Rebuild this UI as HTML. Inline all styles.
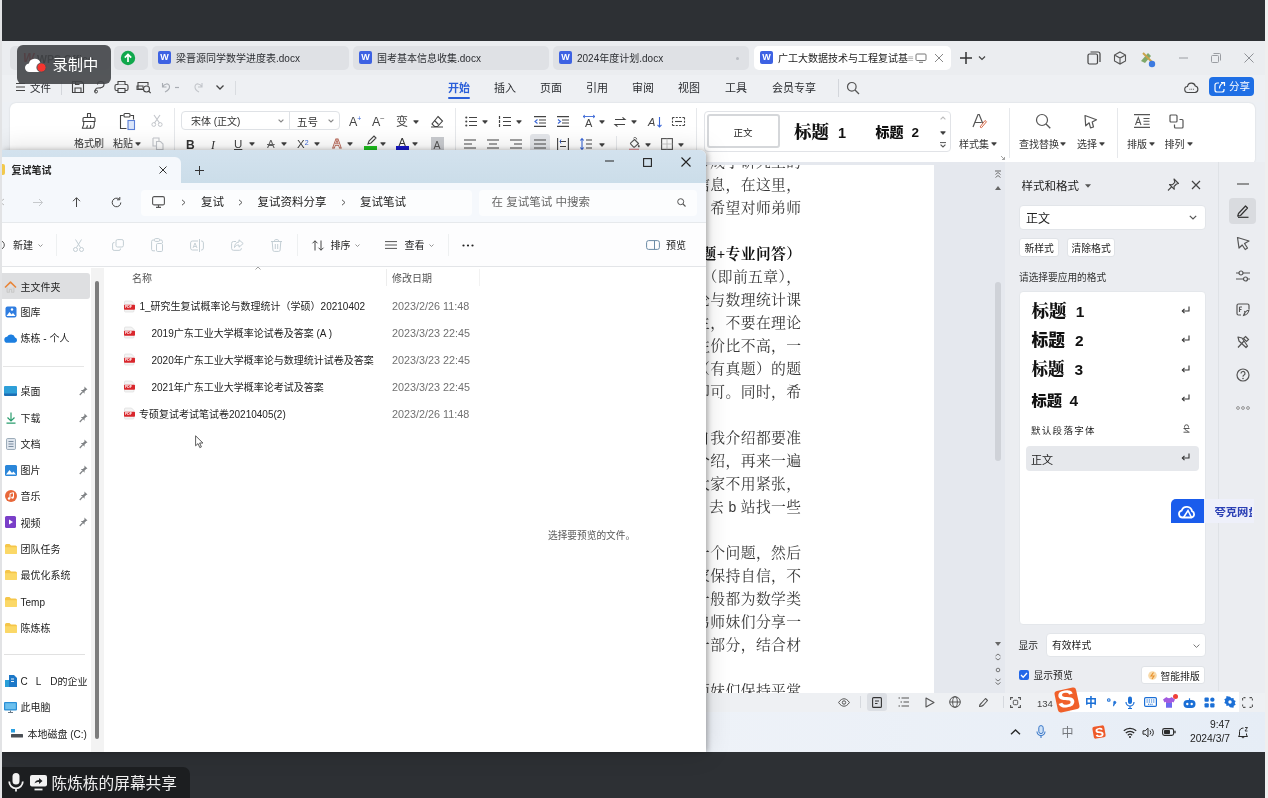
<!DOCTYPE html>
<html lang="zh-CN">
<head>
<meta charset="utf-8">
<title>屏幕共享</title>
<style>
*{box-sizing:border-box;margin:0;padding:0}
html,body{width:1268px;height:798px;overflow:hidden;background:#2d3034}
body{position:relative;font-family:"Liberation Sans","Noto Sans CJK SC",sans-serif;font-size:10px;color:#333;filter:blur(0.45px)}
.abs{position:absolute}
.t{position:absolute;white-space:nowrap;line-height:1;margin-top:1.300px}
svg{position:absolute;overflow:visible}
/* ---------- frame ---------- */
#leftstrip{left:0;top:0;width:1.500px;height:798px;background:#e2e3e5}
#wps{left:2px;top:41px;width:1263px;height:711px;overflow:hidden;background:#edf0f4}
#tabbar{left:0;top:0;width:1266px;height:34px;background:#ebedf0}
.tab{position:absolute;top:5px;height:24px;border-radius:5px;background:#dfe1e5}
.tab.on{background:#fff}
.wico{position:absolute;top:5px;left:6px;width:13px;height:13px;border-radius:2px;background:#3d62e3;color:#fff;font-size:9px;font-weight:bold;text-align:center;line-height:13px}
.tab .t{left:24px;top:7px;font-size:10px;color:#2d2f33}
#menubar{left:0;top:34px;width:1266px;height:27px;background:#eef0f3}
.m{position:absolute;top:8.300px;font-size:11px;color:#2a2c30;white-space:nowrap;line-height:1}
#ribbon{left:8px;top:62px;width:1245px;height:61.500px;background:#fff;border-radius:6px;box-shadow:0 0 2px rgba(0,0,0,.12)}
#ribbon .t{font-size:10px;color:#333}
/* ---------- doc ---------- */
#docbg{left:700px;top:121px;width:304px;height:531.500px;background:#e5e8ee;border-right:1px solid #dcdfe5}
#page{left:704px;top:123.500px;width:228px;height:529px;background:#fff;overflow:hidden}
.dl{position:absolute;left:0;white-space:nowrap;font-family:"Liberation Serif","Noto Serif CJK SC",serif;font-size:14.800px;letter-spacing:.4px;color:#383838;line-height:16px}
#panel{left:1003px;top:121px;width:263px;height:531.500px;background:#ebedf1}
#rtool{left:1216px;top:121px;width:50px;height:529px}
#status{left:700px;top:650px;width:566px;height:21px;background:linear-gradient(transparent 1.500px,#eef0f3 1.500px)}
#taskbar{left:700px;top:671px;width:566px;height:40px;background:linear-gradient(90deg,#eef2f8,#e6edf6)}
/* ---------- explorer ---------- */
#exp{left:1.500px;top:150px;width:704.500px;height:602px;background:#fff;box-shadow:2px 0 5px rgba(0,0,0,.26),0 0 26px rgba(0,0,0,.15);border-radius:0 6px 0 0;overflow:hidden}
#etitle{left:0;top:0;width:706px;height:33px;background:linear-gradient(#d3e2ee,#cbdde9)}
#etab{left:-6px;top:7px;width:185px;height:26px;background:#f5f8fc;border-radius:6px 6px 0 0}
#eaddr{left:0;top:33px;width:706px;height:39px;background:#f5f8fc}
#etool{left:0;top:72px;width:706px;height:45px;background:#fdfdfe;border-bottom:1px solid #e3e5e8;border-top:1px solid #e6e9ec}
#enav{left:0;top:117px;width:103px;height:485px;background:#fff}
.nv{position:absolute;margin-top:1.200px;left:20px;font-size:10px;color:#222;white-space:nowrap;line-height:1}
.fl{position:absolute;margin-top:1.200px;font-size:10px;color:#222;white-space:nowrap;line-height:1}
.fd{position:absolute;margin-top:.2px;left:392px;font-size:10.800px;color:#707070;white-space:nowrap;line-height:1}
/* ---------- overlays ---------- */
#rec{left:17px;top:45px;width:94px;height:39px;background:rgba(66,69,72,.9);border-radius:6px}
#share{left:0;top:766.500px;width:189.500px;height:32px;background:#1c1e20;border-radius:0 7px 0 0}
</style>
</head>
<body>

<!-- ================= WPS window ================= -->
<div id="wps" class="abs">
  <div id="tabbar" class="abs">
    <div class="tab" style="left:8px;width:100px"><span class="t" style="left:13px;top:5px;font-size:12px;font-weight:bold;font-style:italic;color:#d8232a">W</span><span class="t" style="left:27px;color:#222;font-size:10.500px;font-weight:bold">WPS Office</span></div>
    <div class="tab" style="left:112px;width:34px"><svg style="left:6px;top:4px" width="16" height="16" viewBox="0 0 16 16"><circle cx="8" cy="8" r="7.2" fill="#10a84c"/><path d="M8 12V4.6M4.8 7.6L8 4.4l3.2 3.2" stroke="#fff" stroke-width="1.7" fill="none"/></svg></div>
    <div class="tab" style="left:150px;width:197px"><div class="wico">W</div><span class="t">梁晋源同学数学进度表.docx</span></div>
    <div class="tab" style="left:351px;width:196px"><div class="wico">W</div><span class="t">国考基本信息收集.docx</span></div>
    <div class="tab" style="left:551px;width:196px"><div class="wico">W</div><span class="t">2024年度计划.docx</span><div class="abs" style="left:183px;top:11px;width:3px;height:3px;border-radius:2px;background:#b9bcc2"></div></div>
    <div class="tab on" style="left:752px;width:197px"><div class="wico">W</div><span class="t" style="color:#222">广工大数据技术与工程复试基<span style="color:#aaa">≡</span></span>
      <svg style="left:161px;top:7px" width="12" height="10" viewBox="0 0 12 10"><rect x="1" y="1" width="10" height="6.5" rx="1" fill="none" stroke="#777" stroke-width="1"/><path d="M4 9.3h4" stroke="#777"/></svg>
      <svg style="left:180px;top:7px" width="10" height="10" viewBox="0 0 10 10"><path d="M1 1l8 8M9 1l-8 8" stroke="#888" stroke-width="1"/></svg></div>
    <svg style="left:957px;top:10px" width="30" height="14" viewBox="0 0 30 14"><path d="M7 1v12M1 7h12" stroke="#333" stroke-width="1.5"/><path d="M20 5.5l3 3 3-3" stroke="#444" stroke-width="1.2" fill="none"/></svg>
    <svg style="left:1085px;top:10px" width="14" height="14" viewBox="0 0 14 14"><rect x="1" y="3" width="9.5" height="10" rx="1.5" fill="none" stroke="#444" stroke-width="1.2"/><path d="M3.5 1h7.5a2 2 0 0 1 2 2v8" fill="none" stroke="#444" stroke-width="1.2"/></svg>
    <svg style="left:1111px;top:10px" width="14" height="14" viewBox="0 0 14 14"><path d="M7 1l5.5 3v6L7 13 1.5 10V4zM1.5 4L7 7l5.5-3M7 7v6" fill="none" stroke="#555" stroke-width="1.1"/></svg>
    <svg style="left:1136px;top:8px" width="20" height="20" viewBox="0 0 20 20"><path d="M3 12l7-8 3 3-6 7z" fill="#7fa86a"/><path d="M5 4l9 9" stroke="#c9a24a" stroke-width="2"/><circle cx="14" cy="15" r="3.2" fill="#3d7be0"/></svg>
    <svg style="left:1176.500px;top:16px" width="9" height="2" viewBox="0 0 9 2"><path d="M0 1h9" stroke="#9a9da2" stroke-width="1"/></svg>
    <svg style="left:1209px;top:12px" width="10" height="10" viewBox="0 0 10 10"><rect x=".5" y="2.500" width="7" height="7" rx="1" fill="none" stroke="#9a9da2" stroke-width="1"/><path d="M2.500 .5h6a1 1 0 0 1 1 1v6" fill="none" stroke="#9a9da2" stroke-width="1"/></svg>
    <svg style="left:1242px;top:12px" width="10" height="10" viewBox="0 0 10 10"><path d="M.5.500l9 9M9.500.5l-9 9" stroke="#8f9297" stroke-width="1"/></svg>
  </div>
  <div id="menubar" class="abs">
    <svg style="left:14px;top:6.5px" width="10" height="10" viewBox="0 0 10 10"><path d="M0 1.5h9M0 5h9M0 8.5h9" stroke="#444" stroke-width="1.1"/></svg>
    <span class="m" style="left:28px;font-size:10.5px">文件</span>
    <div class="abs" style="left:59px;top:6px;width:1px;height:14px;background:#d3d6db"></div>
    <svg style="left:69px;top:4.5px" width="14" height="14" viewBox="0 0 14 14"><path d="M1.5 1.5h9l2 2v9h-11z" fill="none" stroke="#444" stroke-width="1.1"/><path d="M4 12.5V8h6v4.5M4.5 1.5v3h4" fill="none" stroke="#444" stroke-width="1.1"/></svg>
    <svg style="left:91px;top:4.5px" width="14" height="14" viewBox="0 0 14 14"><path d="M2 12c0-3 .5-4 3-4h3M5 8c3 0 6-1 6-3.5S9 1.5 7.5 1.5 4.5 2.5 4.500 4.500" fill="none" stroke="#444" stroke-width="1.1"/><circle cx="3" cy="11.500" r="1.500" fill="none" stroke="#444"/></svg>
    <svg style="left:112px;top:4.5px" width="15" height="14" viewBox="0 0 15 14"><rect x="1" y="4.500" width="13" height="6" rx="1.500" fill="none" stroke="#444" stroke-width="1.100"/><path d="M4 4.500v-3h7v3M4 8.500h7v4h-7z" fill="#edf0f4" stroke="#444" stroke-width="1.100"/></svg>
    <svg style="left:134px;top:4.5px" width="16" height="14" viewBox="0 0 16 14"><path d="M2 9V2.500h10v3M2 9h4" fill="none" stroke="#444" stroke-width="1.100"/><rect x="1" y="6" width="6" height="3.500" fill="none" stroke="#444"/><circle cx="10.500" cy="9" r="3" fill="none" stroke="#444" stroke-width="1.100"/><path d="M12.700 11.200l2 2" stroke="#444" stroke-width="1.200"/></svg>
    <svg style="left:158px;top:5.5px" width="22" height="12" viewBox="0 0 22 12"><path d="M2.500 2v4h4M2.800 6C4 2.500 9 1.500 9.500 5.500 9.800 8 7 10 5 11" fill="none" stroke="#a9adb3" stroke-width="1.100"/><path d="M15 6.500h4" stroke="#a9adb3" stroke-width="1.200"/></svg>
    <svg style="left:190px;top:5.5px" width="14" height="12" viewBox="0 0 14 12"><path d="M10 2v4h-4M9.800 6C8.500 2.500 3.500 1.500 3 5.500 2.800 8 5 10 7 11" fill="none" stroke="#c2c5ca" stroke-width="1.100"/></svg>
    <svg style="left:213px;top:8.5px" width="10" height="7" viewBox="0 0 10 7"><path d="M1.500 1.500l3.500 3.500 3.500-3.500" fill="none" stroke="#444" stroke-width="1.300"/></svg>
    <div class="abs" style="left:233px;top:6px;width:1px;height:14px;background:#d9dce0"></div>
    <span class="m" style="left:446px;color:#2b5fd9;font-weight:bold">开始</span>
    <div class="abs" style="left:446px;top:22px;width:22px;height:2px;background:#2b5fd9;border-radius:1px"></div>
    <span class="m" style="left:492px">插入</span>
    <span class="m" style="left:538px">页面</span>
    <span class="m" style="left:584px">引用</span>
    <span class="m" style="left:630px">审阅</span>
    <span class="m" style="left:676px">视图</span>
    <span class="m" style="left:723px">工具</span>
    <span class="m" style="left:770px">会员专享</span>
    <div class="abs" style="left:836px;top:4px;width:1px;height:18px;background:#d3d6db"></div>
    <svg style="left:844px;top:6px" width="14" height="14" viewBox="0 0 14 14"><circle cx="5.800" cy="5.800" r="4.300" fill="none" stroke="#555" stroke-width="1.200"/><path d="M9 9l4 4" stroke="#555" stroke-width="1.300"/></svg>
    <svg style="left:1182px;top:6px" width="15" height="14" viewBox="0 0 15 14"><path d="M4 11.500a3 3 0 0 1-.500-6A4 4 0 0 1 11.300 5a3.300 3.300 0 0 1-.300 6.500z" fill="none" stroke="#444" stroke-width="1.100"/><path d="M5.500 8.200h.800M7.300 8.200h.800M9.100 8.200h.800" stroke="#444" stroke-width="1.100"/></svg>
    <div class="abs" style="left:1207px;top:2px;width:45px;height:19px;border-radius:4px;background:#1f6fe5"></div>
    <svg style="left:1212px;top:6px" width="12" height="12" viewBox="0 0 12 12"><path d="M5 2H3a2 2 0 0 0-2 2v5a2 2 0 0 0 2 2h5a2 2 0 0 0 2-2V8" fill="none" stroke="#fff" stroke-width="1.200"/><path d="M7 1.500h3.500V5M10.500 1.500C7 2.500 5.500 5 5.500 7.500" fill="none" stroke="#fff" stroke-width="1.200"/></svg>
    <span class="m" style="left:1227px;top:6px;color:#fff;font-size:10.500px">分享</span>
  </div>
  <div id="ribbon" class="abs">
    <svg style="left:69.5px;top:9.0px" width="18" height="18" viewBox="0 0 18 18"><path d="M7.500 1.500h3v4h-3zM7.500 5.500H4a1 1 0 0 0-1 1v3h12v-3a1 1 0 0 0-1-1h-3.500" fill="none" stroke="#444" stroke-width="1.100" stroke-linejoin="round"/><path d="M3.800 9.500c.2 2.500-.3 4.800-1.500 6.800h10.200c1.300-.2 2-3 1.800-6.800M6.500 16.300c.6-1 .9-2 .9-3M10 16.300c.5-1 .7-2 .7-3" fill="none" stroke="#444" stroke-width="1.100" stroke-linejoin="round"/></svg>
    <span class="t" style="left:64px;top:35px">格式刷</span>
    <svg style="left:108.0px;top:8.5px" width="18" height="19" viewBox="0 0 18 19"><path d="M5.500 3.500h-3v13h6M12.500 3.500h3v4" fill="none" stroke="#444" stroke-width="1.100"/><rect x="6" y="1.500" width="6" height="3.500" rx="1" fill="#fff" stroke="#444" stroke-width="1.100"/><rect x="10" y="8.500" width="6.500" height="9" fill="#dbe6fb" stroke="#5b7fd6" stroke-width="1.100"/></svg>
    <span class="t" style="left:103px;top:35px">粘贴</span>
    <svg style="left:125px;top:38.5px" width="6" height="4" viewBox="0 0 6 4"><path d="M.7.800h4.600L3 3.400z" fill="#3c3c3c" stroke="#3c3c3c" stroke-width=".9" stroke-linejoin="round"/></svg>
    <svg style="left:141.0px;top:10.5px" width="12" height="13" viewBox="0 0 12 13"><path d="M3 1l5.500 8M9 1L3.500 9" stroke="#c3c6cb" stroke-width="1.100"/><circle cx="2.800" cy="10.500" r="1.900" fill="none" stroke="#c3c6cb"/><circle cx="9.200" cy="10.500" r="1.900" fill="none" stroke="#c3c6cb"/></svg>
    <svg style="left:142.0px;top:34.0px" width="12" height="13" viewBox="0 0 12 13"><path d="M1 1h6v3M1 1v8h3" fill="none" stroke="#c3c6cb" stroke-width="1.100"/><path d="M4.500 4.500h4l2.500 2.500v5.500h-6.500z" fill="none" stroke="#c3c6cb" stroke-width="1.100"/></svg>
    <div class="abs" style="left:163.5px;top:5px;width:1px;height:50px;background:#e6e8eb"></div>
    <div class="abs" style="left:171px;top:8px;width:159px;height:19px;border:1px solid #dfe2e6;border-radius:4px"></div>
    <div class="abs" style="left:278.5px;top:8px;width:1px;height:19px;background:#dfe2e6"></div>
    <span class="t" style="left:181px;top:12.5px">宋体 (正文)</span>
    <svg style="left:268px;top:16px" width="6" height="4" viewBox="0 0 6 4"><path d="M.6.6L3 3 5.400.6" fill="none" stroke="#888" stroke-width="1.200"/></svg>
    <span class="t" style="left:287px;top:12.5px;font-size:10.500px">五号</span>
    <svg style="left:318px;top:16px" width="6" height="4" viewBox="0 0 6 4"><path d="M.6.6L3 3 5.400.6" fill="none" stroke="#888" stroke-width="1.200"/></svg>
    <span class="t" style="left:339px;top:12px;font-size:12.500px;color:#444">A<sup style="font-size:7px;position:relative;top:-1px;vertical-align:top;color:#3a66d6">+</sup></span>
    <span class="t" style="left:362px;top:12px;font-size:12.500px;color:#444">A<sup style="font-size:7px;position:relative;top:-2px;vertical-align:top">–</sup></span>
    <span class="t" style="left:386px;top:12px;font-size:12px;color:#444">变</span>
    <svg style="left:403px;top:16.5px" width="6" height="4" viewBox="0 0 6 4"><path d="M.7.800h4.600L3 3.400z" fill="#3c3c3c" stroke="#3c3c3c" stroke-width=".9" stroke-linejoin="round"/></svg>
    <svg style="left:420.0px;top:11.5px" width="14" height="13" viewBox="0 0 14 13"><path d="M8 1.500l4.500 4.500-5 5.500h-3l-2.500-2.500z" fill="none" stroke="#444" stroke-width="1.100"/><path d="M4.500 5.500l4 4M1 12h12" stroke="#444" stroke-width="1.100"/></svg>
    <span class="t" style="left:176px;top:34.5px;font-size:12px;font-weight:bold;color:#333">B</span>
    <span class="t" style="left:201px;top:34.5px;font-size:12px;font-style:italic;font-family:'Liberation Serif',serif;color:#333">I</span>
    <span class="t" style="left:224px;top:34.5px;font-size:11.500px;text-decoration:underline;color:#444">U</span>
    <svg style="left:238.5px;top:39px" width="6" height="4" viewBox="0 0 6 4"><path d="M.7.800h4.600L3 3.400z" fill="#3c3c3c" stroke="#3c3c3c" stroke-width=".9" stroke-linejoin="round"/></svg>
    <span class="t" style="left:257px;top:34.5px;font-size:11.500px;text-decoration:line-through;color:#666">A</span>
    <svg style="left:271px;top:39px" width="6" height="4" viewBox="0 0 6 4"><path d="M.7.800h4.600L3 3.400z" fill="#3c3c3c" stroke="#3c3c3c" stroke-width=".9" stroke-linejoin="round"/></svg>
    <span class="t" style="left:287px;top:34.5px;font-size:11.500px;color:#444">X<sup style="font-size:7px;vertical-align:top;color:#3a66d6">2</sup></span>
    <svg style="left:304px;top:39px" width="6" height="4" viewBox="0 0 6 4"><path d="M.7.800h4.600L3 3.400z" fill="#3c3c3c" stroke="#3c3c3c" stroke-width=".9" stroke-linejoin="round"/></svg>
    <svg style="left:321px;top:33px" width="12" height="14" viewBox="0 0 12 14"><text x="6" y="12" text-anchor="middle" font-family="Liberation Sans,sans-serif" font-size="13" font-weight="bold" fill="#fff" stroke="#b5604f" stroke-width=".8">A</text></svg>
    <svg style="left:337px;top:39px" width="6" height="4" viewBox="0 0 6 4"><path d="M.7.800h4.600L3 3.400z" fill="#3c3c3c" stroke="#3c3c3c" stroke-width=".9" stroke-linejoin="round"/></svg>
    <svg style="left:354.5px;top:32.0px" width="12" height="10" viewBox="0 0 12 10"><path d="M3 9l1-3 5-5 2 2-5 5z" fill="none" stroke="#444" stroke-width="1.100"/></svg>
    <div class="abs" style="left:354px;top:43px;width:13px;height:3.500px;background:#1fc21f"></div>
    <svg style="left:370px;top:39px" width="6" height="4" viewBox="0 0 6 4"><path d="M.7.800h4.600L3 3.400z" fill="#3c3c3c" stroke="#3c3c3c" stroke-width=".9" stroke-linejoin="round"/></svg>
    <span class="t" style="left:388.5px;top:32.5px;font-size:11px;color:#333">A</span>
    <div class="abs" style="left:386px;top:43px;width:13px;height:3.500px;background:#1717c9"></div>
    <svg style="left:402px;top:39px" width="6" height="4" viewBox="0 0 6 4"><path d="M.7.800h4.600L3 3.400z" fill="#3c3c3c" stroke="#3c3c3c" stroke-width=".9" stroke-linejoin="round"/></svg>
    <div class="abs" style="left:420.5px;top:34px;width:13px;height:13px;background:#c9cbcf"></div>
    <span class="t" style="left:423.5px;top:35.5px;font-size:10.500px;color:#555">A</span>
    <div class="abs" style="left:444.5px;top:5px;width:1px;height:50px;background:#e6e8eb"></div>
    <svg style="left:455.0px;top:13.0px" width="12" height="11" viewBox="0 0 12 11"><circle cx="1.300" cy="1.500" r="1.100" fill="#444"/><circle cx="1.300" cy="5.500" r="1.100" fill="#444"/><circle cx="1.300" cy="9.500" r="1.100" fill="#444"/><path d="M4 1.500h8M4 5.500h8M4 9.500h8" stroke="#444" stroke-width="1.100"/></svg>
    <svg style="left:472px;top:17px" width="6" height="4" viewBox="0 0 6 4"><path d="M.7.800h4.600L3 3.400z" fill="#3c3c3c" stroke="#3c3c3c" stroke-width=".9" stroke-linejoin="round"/></svg>
    <svg style="left:488.5px;top:13.0px" width="12" height="11" viewBox="0 0 12 11"><path d="M.5 0v3M.5 4v3M.5 8v3" stroke="#444" stroke-width="1.200"/><path d="M4 1.500h8M4 5.500h8M4 9.500h8" stroke="#444" stroke-width="1.100"/></svg>
    <svg style="left:506px;top:17px" width="6" height="4" viewBox="0 0 6 4"><path d="M.7.800h4.600L3 3.400z" fill="#3c3c3c" stroke="#3c3c3c" stroke-width=".9" stroke-linejoin="round"/></svg>
    <svg style="left:523.5px;top:13.0px" width="12" height="11" viewBox="0 0 12 11"><path d="M0 .6h12M5 4h7M5 7h7M0 10.400h12" stroke="#444" stroke-width="1.100"/><path d="M3.500 3.500L1 5.500l2.500 2" fill="none" stroke="#3a66d6" stroke-width="1.100"/></svg>
    <svg style="left:546.5px;top:13.0px" width="12" height="11" viewBox="0 0 12 11"><path d="M0 .6h12M5 4h7M5 7h7M0 10.400h12" stroke="#444" stroke-width="1.100"/><path d="M1 3.500l2.500 2L1 7.500" fill="none" stroke="#3a66d6" stroke-width="1.100"/></svg>
    <span class="t" style="left:575px;top:13.5px;font-size:11px;color:#444">A</span>
    <svg style="left:572.0px;top:11.5px" width="14" height="3" viewBox="0 0 14 3"><path d="M1 1.500h12M3 0L1 1.500 3 3M11 0l2 1.500L11 3" fill="none" stroke="#3a66d6" stroke-width=".9"/></svg>
    <svg style="left:589px;top:17px" width="6" height="4" viewBox="0 0 6 4"><path d="M.7.800h4.600L3 3.400z" fill="#3c3c3c" stroke="#3c3c3c" stroke-width=".9" stroke-linejoin="round"/></svg>
    <svg style="left:604.0px;top:13.5px" width="12" height="10" viewBox="0 0 12 10"><path d="M1 2.500h10L8.500 .3M11 7.500H1L3.500 9.700" fill="none" stroke="#444" stroke-width="1.100"/></svg>
    <svg style="left:620.5px;top:17px" width="6" height="4" viewBox="0 0 6 4"><path d="M.7.800h4.600L3 3.400z" fill="#3c3c3c" stroke="#3c3c3c" stroke-width=".9" stroke-linejoin="round"/></svg>
    <span class="t" style="left:638px;top:13px;font-size:11px;font-style:italic;color:#444">A</span>
    <svg style="left:646.5px;top:13.5px" width="5" height="11" viewBox="0 0 5 11"><path d="M2.500 0v10M.5 7.800l2 2.200 2-2.200" fill="none" stroke="#3a66d6" stroke-width="1.100"/></svg>
    <svg style="left:661.5px;top:14.0px" width="13" height="9" viewBox="0 0 13 9"><path d="M.5 .5h12M.5 8.500h12M.5 .5v8M12.500 .5v8" fill="none" stroke="#444" stroke-width="1.100" stroke-dasharray="2 1.300"/><path d="M3 4.500h7" stroke="#444" stroke-width="1.100"/></svg>
    <svg style="left:454.0px;top:36.0px" width="12" height="10" viewBox="0 0 12 10"><path d="M0 1h12" stroke="#555" stroke-width="1.100"/><path d="M0 5h8" stroke="#555" stroke-width="1.100"/><path d="M0 9h12" stroke="#555" stroke-width="1.100"/></svg>
    <svg style="left:477.0px;top:36.0px" width="12" height="10" viewBox="0 0 12 10"><path d="M0 1h12" stroke="#555" stroke-width="1.100"/><path d="M2 5h8" stroke="#555" stroke-width="1.100"/><path d="M0 9h12" stroke="#555" stroke-width="1.100"/></svg>
    <svg style="left:500.0px;top:36.0px" width="12" height="10" viewBox="0 0 12 10"><path d="M0 1h12" stroke="#555" stroke-width="1.100"/><path d="M4 5h8" stroke="#555" stroke-width="1.100"/><path d="M0 9h12" stroke="#555" stroke-width="1.100"/></svg>
    <div class="abs" style="left:520px;top:31px;width:20px;height:19px;border-radius:3px;background:#e4e6ea"></div>
    <svg style="left:524.0px;top:36.0px" width="12" height="10" viewBox="0 0 12 10"><path d="M0 1h12" stroke="#555" stroke-width="1.100"/><path d="M0 5h12" stroke="#555" stroke-width="1.100"/><path d="M0 9h12" stroke="#555" stroke-width="1.100"/></svg>
    <svg style="left:547.0px;top:35.0px" width="12" height="12" viewBox="0 0 12 12"><path d="M.6 0v12M11.400 0v12" stroke="#444" stroke-width="1.100"/><path d="M3 3.500h6M3 8.500h6" stroke="#444" stroke-width="1.100"/><path d="M4 1.500L3 3.500 4 5.500" fill="none" stroke="#3a66d6"/></svg>
    <svg style="left:570.0px;top:35.0px" width="12" height="12" viewBox="0 0 12 12"><path d="M2 .5v11M.3 2.500L2 .5l1.700 2M.3 9.500L2 11.500l1.700-2" fill="none" stroke="#3a66d6" stroke-width="1.100"/><path d="M6 2h6M6 6h6M6 10h6" stroke="#444" stroke-width="1.100"/></svg>
    <svg style="left:588.5px;top:39.5px" width="6" height="4" viewBox="0 0 6 4"><path d="M.7.800h4.600L3 3.400z" fill="#3c3c3c" stroke="#3c3c3c" stroke-width=".9" stroke-linejoin="round"/></svg>
    <div class="abs" style="left:606px;top:33px;width:1px;height:16px;background:#e6e8eb"></div>
    <svg style="left:618.0px;top:34.0px" width="12" height="13" viewBox="0 0 12 13"><path d="M5.500 1.200a1.800 1.800 0 0 1 3.200 1.200" fill="none" stroke="#555" stroke-width="1"/><path d="M6.500 2.500l4 4-3.700 3.300a1 1 0 0 1-1.400 0L2.800 7.200a1 1 0 0 1 0-1.400z" fill="none" stroke="#555" stroke-width="1.100" stroke-linejoin="round"/><path d="M10.800 7.500c.6.900.9 1.400.9 1.900a.9.900 0 0 1-1.800 0c0-.5.300-1 .9-1.900z" fill="#555"/><path d="M1 12.300h10" stroke="#e29aa0" stroke-width="1.300"/></svg>
    <svg style="left:634.5px;top:39.5px" width="6" height="4" viewBox="0 0 6 4"><path d="M.7.800h4.600L3 3.400z" fill="#3c3c3c" stroke="#3c3c3c" stroke-width=".9" stroke-linejoin="round"/></svg>
    <svg style="left:650.5px;top:35.0px" width="12" height="12" viewBox="0 0 12 12"><rect x=".6" y=".6" width="10.800" height="10.800" fill="none" stroke="#555" stroke-width="1.100"/><path d="M6 .6v10.800M.6 6h10.800" stroke="#bbb" stroke-width=".8"/></svg>
    <svg style="left:667.5px;top:39.5px" width="6" height="4" viewBox="0 0 6 4"><path d="M.7.800h4.600L3 3.400z" fill="#3c3c3c" stroke="#3c3c3c" stroke-width=".9" stroke-linejoin="round"/></svg>
    <div class="abs" style="left:686px;top:5px;width:1px;height:50px;background:#e6e8eb"></div>
    <div class="abs" style="left:693.5px;top:8px;width:247px;height:41px;border:1px solid #e1e3e7;border-radius:4px"></div>
    <div class="abs" style="left:697px;top:11px;width:73px;height:34px;border:2px solid #d5d7da;border-radius:3px"></div>
    <span class="t" style="left:723.5px;top:24px;font-size:9.500px;color:#222">正文</span>
    <span class="t" style="left:784px;top:20px;font-size:17.5px;font-family:'Liberation Serif','Noto Serif CJK SC',serif;font-weight:900;color:#111">标题<span style="font-family:'Liberation Sans',sans-serif;font-size:14.5px;margin-left:9px">1</span></span>
    <span class="t" style="left:865.5px;top:20.300px;font-size:14px;font-family:'Liberation Sans','Noto Sans CJK SC',sans-serif;font-weight:bold;color:#111;font-weight:900">标题<span style="font-family:'Liberation Sans',sans-serif;font-size:13.5px;margin-left:8px">2</span></span>
    <svg style="left:930.0px;top:13.0px" width="6" height="4" viewBox="0 0 6 4"><path d="M.6 3.400L3 1l2.400 2.400" fill="none" stroke="#bbb" stroke-width="1.100"/></svg>
    <svg style="left:930.0px;top:27.5px" width="6" height="4" viewBox="0 0 6 4"><path d="M.7.800h4.600L3 3.400z" fill="#3c3c3c" stroke="#3c3c3c" stroke-width=".9" stroke-linejoin="round"/></svg>
    <svg style="left:930.0px;top:39.0px" width="6" height="6" viewBox="0 0 6 6"><path d="M0 .6h6" stroke="#555"/><path d="M.6 2.600L3 5l2.400-2.400" fill="none" stroke="#555" stroke-width="1.100"/></svg>
    <svg style="left:960.5px;top:10.0px" width="16" height="16" viewBox="0 0 16 16"><path d="M2 14L7 1.500h1.200L12 11M4 9.500h6.500" fill="none" stroke="#555" stroke-width="1.200"/><path d="M9 14l5-6.500 1.500 1.200-5 6z" fill="#fff" stroke="#d66b4b" stroke-width="1"/></svg>
    <span class="t" style="left:949px;top:35.5px">样式集</span>
    <svg style="left:981px;top:39px" width="6" height="4" viewBox="0 0 6 4"><path d="M.7.800h4.600L3 3.400z" fill="#3c3c3c" stroke="#3c3c3c" stroke-width=".9" stroke-linejoin="round"/></svg>
    <svg style="left:991.0px;top:53.0px" width="4" height="4" viewBox="0 0 4 4"><path d="M0 0l3.500 3.500M3.500 1v2.500H1" fill="none" stroke="#999" stroke-width=".9"/></svg>
    <div class="abs" style="left:999px;top:5px;width:1px;height:50px;background:#e6e8eb"></div>
    <svg style="left:1025.0px;top:10.0px" width="16" height="16" viewBox="0 0 16 16"><circle cx="7" cy="7" r="5.500" fill="none" stroke="#555" stroke-width="1.200"/><path d="M11 11l4.300 4.300" stroke="#555" stroke-width="1.300"/></svg>
    <span class="t" style="left:1009px;top:35.5px">查找替换</span>
    <svg style="left:1050px;top:39px" width="6" height="4" viewBox="0 0 6 4"><path d="M.7.800h4.600L3 3.400z" fill="#3c3c3c" stroke="#3c3c3c" stroke-width=".9" stroke-linejoin="round"/></svg>
    <svg style="left:1072.5px;top:10.5px" width="15" height="15" viewBox="0 0 15 15"><path d="M2 1.500l11.500 4.300-4.300 2.200 1.300 5-3 .8-1.300-5-3.500 3z" fill="none" stroke="#555" stroke-width="1.200" stroke-linejoin="round"/></svg>
    <span class="t" style="left:1067px;top:35.5px">选择</span>
    <svg style="left:1088.5px;top:39px" width="6" height="4" viewBox="0 0 6 4"><path d="M.7.800h4.600L3 3.400z" fill="#3c3c3c" stroke="#3c3c3c" stroke-width=".9" stroke-linejoin="round"/></svg>
    <div class="abs" style="left:1106.5px;top:5px;width:1px;height:50px;background:#e6e8eb"></div>
    <svg style="left:1123.5px;top:11.0px" width="16" height="14" viewBox="0 0 16 14"><path d="M0 .6h16M0 13.400h16" stroke="#555" stroke-width="1.100"/><path d="M1.500 11L4.300 3.500 7 11M2.500 8.500h3.700" fill="none" stroke="#555" stroke-width="1.100"/><path d="M9.500 4.500h6M9.500 7.300h6M9.500 10.200h6" stroke="#555" stroke-width="1.100"/></svg>
    <span class="t" style="left:1117px;top:35.5px">排版</span>
    <svg style="left:1138.5px;top:39px" width="6" height="4" viewBox="0 0 6 4"><path d="M.7.800h4.600L3 3.400z" fill="#3c3c3c" stroke="#3c3c3c" stroke-width=".9" stroke-linejoin="round"/></svg>
    <svg style="left:1159.0px;top:10.5px" width="15" height="15" viewBox="0 0 15 15"><rect x="1" y="1" width="7" height="7" rx="1" fill="none" stroke="#555" stroke-width="1.200"/><path d="M10.500 5.500h2.500a1 1 0 0 1 1 1v6.500a1 1 0 0 1-1 1H6.500a1 1 0 0 1-1-1v-2.500" fill="none" stroke="#555" stroke-width="1.200"/></svg>
    <span class="t" style="left:1154.5px;top:35.5px">排列</span>
    <svg style="left:1176.5px;top:39px" width="6" height="4" viewBox="0 0 6 4"><path d="M.7.800h4.600L3 3.400z" fill="#3c3c3c" stroke="#3c3c3c" stroke-width=".9" stroke-linejoin="round"/></svg>
  </div>
  <div id="docbg" class="abs"></div>
  <div class="abs" style="left:992.500px;top:241px;width:6.500px;height:179px;border-radius:3px;background:#cfd2d8"></div>
  <svg style="left:993px;top:129px" width="6" height="8" viewBox="0 0 6 8"><path d="M0 1h6" stroke="#666"/><path d="M.5 4.500L3 2.500l2.500 2M.5 7.500L3 5.500l2.500 2" fill="none" stroke="#666" stroke-width=".9"/></svg>
  <svg style="left:993px;top:144.500px" width="6" height="4" viewBox="0 0 6 4"><path d="M0 4l3-4 3 4z" fill="#666"/></svg>
  <svg style="left:992.500px;top:600.500px" width="6" height="4" viewBox="0 0 6 4"><path d="M0 0l3 4 3-4z" fill="#666"/></svg>
  <svg style="left:992.500px;top:612px" width="6" height="8" viewBox="0 0 6 8"><path d="M.5 3L3 1l2.500 2M.5 5l2.500 2 2.500-2" fill="none" stroke="#666" stroke-width=".9"/></svg>
  <svg style="left:992.500px;top:625.500px" width="6" height="6" viewBox="0 0 6 6"><circle cx="3" cy="3" r="1.800" fill="none" stroke="#666" stroke-width=".9"/></svg>
  <svg style="left:992.500px;top:637px" width="6" height="8" viewBox="0 0 6 8"><path d="M.5 1l2.500 2 2.500-2M.5 4.500l2.500 2 2.500-2" fill="none" stroke="#666" stroke-width=".9"/></svg>
  <div id="page" class="abs">
    <div class="dl" style="right:132.500px;left:auto;margin-top:1px;top:-11.5px">形成了研究生的</div>
    <div class="dl" style="right:132.500px;left:auto;margin-top:1px;top:11.5px">信息，在这里，</div>
    <div class="dl" style="right:132.500px;left:auto;margin-top:1px;top:34.5px">，希望对师弟师</div>
    <div class="dl" style="right:132.500px;left:auto;margin-top:1px;top:80.5px;font-weight:bold;color:#111">问题+专业问答）</div>
    <div class="dl" style="right:132.500px;left:auto;margin-top:1px;top:103.5px">（即前五章），</div>
    <div class="dl" style="right:132.500px;left:auto;margin-top:1px;top:126.5px">论与数理统计课</div>
    <div class="dl" style="right:132.500px;left:auto;margin-top:1px;top:149.5px">主，不要在理论</div>
    <div class="dl" style="right:132.500px;left:auto;margin-top:1px;top:172.5px">性价比不高，一</div>
    <div class="dl" style="right:132.500px;left:auto;margin-top:1px;top:195.5px">（有真题）的题</div>
    <div class="dl" style="right:132.500px;left:auto;margin-top:1px;top:218.5px">即可。同时，希</div>
    <div class="dl" style="right:132.500px;left:auto;margin-top:1px;top:264.5px">自我介绍都要准</div>
    <div class="dl" style="right:132.500px;left:auto;margin-top:1px;top:287.5px">介绍，再来一遍</div>
    <div class="dl" style="right:132.500px;left:auto;margin-top:1px;top:310.5px">大家不用紧张，</div>
    <div class="dl" style="right:132.500px;left:auto;margin-top:1px;top:333.5px">，去 <span style="font-family:'Liberation Sans',sans-serif;font-size:14px">b</span> 站找一些</div>
    <div class="dl" style="right:132.500px;left:auto;margin-top:1px;top:379.5px">一个问题，然后</div>
    <div class="dl" style="right:132.500px;left:auto;margin-top:1px;top:402.5px">家保持自信，不</div>
    <div class="dl" style="right:132.500px;left:auto;margin-top:1px;top:425.5px">一般都为数学类</div>
    <div class="dl" style="right:132.500px;left:auto;margin-top:1px;top:448.5px">弟师妹们分享一</div>
    <div class="dl" style="right:132.500px;left:auto;margin-top:1px;top:471.5px">一部分，结合材</div>
    <div class="dl" style="right:132.500px;left:auto;margin-top:1px;top:517.5px">师妹们保持平常</div>
  </div>
  <div id="panel" class="abs">
    <div class="abs" style="left:213px;top:0;width:1px;height:529px;background:#dfe2e6"></div>
    <span class="t" style="left:16.5px;top:17.5px;font-size:11.500px;color:#222">样式和格式</span>
    <svg style="left:80.0px;top:22.0px" width="6" height="4" viewBox="0 0 6 4"><path d="M0 .3h6L3 3.800z" fill="#555"/></svg>
    <svg style="left:162.0px;top:16.0px" width="12" height="13" viewBox="0 0 12 13"><path d="M7 1l4.500 4.500-2 .5-2.500 2.500.300 2.800L2.500 6.500l2.800.300L7.800 4.300z" fill="none" stroke="#444" stroke-width="1.100" stroke-linejoin="round"/><path d="M4.800 8.700L1 12.500" stroke="#444" stroke-width="1.100"/></svg>
    <svg style="left:186.0px;top:17.5px" width="10" height="10" viewBox="0 0 10 10"><path d="M1 1l8 8M9 1L1 9" stroke="#444" stroke-width="1.200"/></svg>
    <div class="abs" style="left:13.5px;top:42.5px;width:187px;height:25.500px;background:#fff;border:1px solid #e2e5e9;border-radius:4px"></div>
    <span class="t" style="left:21px;top:49.5px;font-size:12px;color:#222">正文</span>
    <svg style="left:184.0px;top:53.0px" width="8" height="5" viewBox="0 0 8 5"><path d="M.8.800L4 4l3.200-3.200" fill="none" stroke="#555" stroke-width="1.200"/></svg>
    <div class="abs" style="left:14px;top:75.5px;width:40px;height:19px;background:#fff;border:1px solid #e0e3e7;border-radius:3px"></div>
    <span class="t" style="left:19.5px;top:80.5px;font-size:9.800px;color:#222">新样式</span>
    <div class="abs" style="left:61.5px;top:75.5px;width:48.500px;height:19px;background:#fff;border:1px solid #e0e3e7;border-radius:3px"></div>
    <span class="t" style="left:66.5px;top:80.5px;font-size:9.800px;color:#222">清除格式</span>
    <span class="t" style="left:14px;top:110px;font-size:9.700px;color:#333">请选择要应用的格式</span>
    <div class="abs" style="left:14px;top:129px;width:187px;height:334px;background:#fff;border:1px solid #e4e7eb;border-radius:4px"></div>
    <span class="t" style="left:26.5px;top:139.5px;font-size:17.6px;font-family:'Liberation Serif','Noto Serif CJK SC',serif;font-weight:900;color:#111">标题<span style="font-family:'Liberation Sans',sans-serif;font-size:15.5px;margin-left:9px">1</span></span>
    <svg style="left:175.500px;top:143.5px" width="9" height="8" viewBox="0 0 9 8"><path d="M8 .5v4.500H1.500" fill="none" stroke="#333" stroke-width="1.100"/><path d="M3.500 2.800L1.300 5l2.200 2.200" fill="none" stroke="#333" stroke-width="1.100"/></svg>
    <span class="t" style="left:26.5px;top:169.5px;font-size:16.7px;font-family:'Liberation Sans','Noto Sans CJK SC',sans-serif;font-weight:bold;color:#111;font-weight:900">标题<span style="font-family:'Liberation Sans',sans-serif;font-size:15.5px;margin-left:10px">2</span></span>
    <svg style="left:175.500px;top:173.0px" width="9" height="8" viewBox="0 0 9 8"><path d="M8 .5v4.500H1.500" fill="none" stroke="#333" stroke-width="1.100"/><path d="M3.500 2.800L1.300 5l2.200 2.200" fill="none" stroke="#333" stroke-width="1.100"/></svg>
    <span class="t" style="left:26.5px;top:199.2px;font-size:16.5px;font-family:'Liberation Serif','Noto Serif CJK SC',serif;font-weight:900;color:#111">标题<span style="font-family:'Liberation Sans',sans-serif;font-size:15.5px;margin-left:10px">3</span></span>
    <svg style="left:175.500px;top:202.5px" width="9" height="8" viewBox="0 0 9 8"><path d="M8 .5v4.500H1.500" fill="none" stroke="#333" stroke-width="1.100"/><path d="M3.500 2.800L1.300 5l2.200 2.200" fill="none" stroke="#333" stroke-width="1.100"/></svg>
    <span class="t" style="left:26.5px;top:229.5px;font-size:15.3px;font-family:'Liberation Sans','Noto Sans CJK SC',sans-serif;font-weight:bold;color:#111;font-weight:900">标题<span style="font-family:'Liberation Sans',sans-serif;font-size:15.5px;margin-left:7.5px">4</span></span>
    <svg style="left:175.500px;top:231.5px" width="9" height="8" viewBox="0 0 9 8"><path d="M8 .5v4.500H1.500" fill="none" stroke="#333" stroke-width="1.100"/><path d="M3.500 2.800L1.300 5l2.200 2.200" fill="none" stroke="#333" stroke-width="1.100"/></svg>
    <span class="t" style="left:26px;top:262.5px;font-size:9.500px;letter-spacing:1.300px;color:#222">默认段落字体</span>
    <svg style="left:177.5px;top:261.5px" width="7" height="9" viewBox="0 0 7 9"><path d="M1.500 3.500V2.800a2 2 0 0 1 4 0v.7" fill="none" stroke="#444" stroke-width=".9"/><path d="M.5 4.500h6M.5 8.200h6M1.500 4.500c0 2 4 2 4 3.700" fill="none" stroke="#444" stroke-width=".9"/></svg>
    <div class="abs" style="left:21px;top:284px;width:173px;height:25px;background:#e6e8ec;border-radius:4px"></div>
    <span class="t" style="left:26px;top:291.5px;font-size:11px;color:#222">正文</span>
    <svg style="left:175.500px;top:291.0px" width="9" height="8" viewBox="0 0 9 8"><path d="M8 .5v4.500H1.500" fill="none" stroke="#333" stroke-width="1.100"/><path d="M3.500 2.800L1.300 5l2.200 2.200" fill="none" stroke="#333" stroke-width="1.100"/></svg>
    <div class="abs" style="left:165.5px;top:337px;width:83.500px;height:24px;background:#eef0fa;border-radius:5px 0 0 0"></div>
    <div class="abs" style="left:165.5px;top:337px;width:33px;height:24px;background:#1a5cec;border-radius:5px 0 0 0"></div>
    <svg style="left:173.0px;top:342.5px" width="18" height="14" viewBox="0 0 18 14"><path d="M4.500 12.500a3.500 3.500 0 0 1-.8-6.900A5.300 5.300 0 0 1 14 6.200a3.300 3.300 0 0 1-.5 6.300z" fill="none" stroke="#fff" stroke-width="1.800"/><path d="M5.500 12.500L10 5.500l3.500 7" fill="none" stroke="#fff" stroke-width="1.600"/></svg>
    <span class="t" style="left:209.5px;top:344px;font-size:11.300px;font-weight:bold;color:#2b40b5;width:37.500px;overflow:hidden">夸克网盘</span>
    <span class="t" style="left:13.5px;top:478.0px;font-size:9.800px;color:#222">显示</span>
    <div class="abs" style="left:40.5px;top:470.5px;width:160px;height:24.500px;background:#fff;border:1px solid #e2e5e9;border-radius:4px"></div>
    <span class="t" style="left:47px;top:478.0px;font-size:9.800px;color:#222">有效样式</span>
    <svg style="left:188.0px;top:481.5px" width="7" height="4" viewBox="0 0 7 4"><path d="M.6.600L3.500 3.400 6.400.6" fill="none" stroke="#777" stroke-width="1"/></svg>
    <div class="abs" style="left:13.5px;top:507.5px;width:10.500px;height:10.500px;background:#2468e8;border-radius:2px"></div>
    <svg style="left:14.8px;top:509.8px" width="8" height="6" viewBox="0 0 8 6"><path d="M1 3l2.200 2.200L7 1" fill="none" stroke="#fff" stroke-width="1.300"/></svg>
    <span class="t" style="left:28.5px;top:508.0px;font-size:9.800px;color:#222">显示预览</span>
    <div class="abs" style="left:136px;top:503.5px;width:64px;height:18.500px;background:#fff;border:1px solid #e0e3e7;border-radius:3px"></div>
    <svg style="left:143.0px;top:508.5px" width="9" height="9" viewBox="0 0 9 9"><circle cx="4.500" cy="4.500" r="4.300" fill="#f8d9a8"/><path d="M5.500 1.500L3 5h3L4 8" fill="none" stroke="#e8902a" stroke-width="1.100"/></svg>
    <span class="t" style="left:155.5px;top:508.5px;font-size:9.800px;color:#222">智能排版</span>
      </div>
  <div id="rtool" class="abs">
    <svg style="left:18.5px;top:21.0px" width="12" height="2" viewBox="0 0 12 2"><path d="M0 1h12" stroke="#555" stroke-width="1.200"/></svg>
    <div class="abs" style="left:11px;top:36px;width:27px;height:25.500px;border-radius:4px;background:#d9dbdf"></div>
    <svg style="left:17.5px;top:41.5px" width="14" height="14" viewBox="0 0 14 14"><path d="M2.500 9.500L9.500 2l2 2-7 7.500-2.800.600z" fill="none" stroke="#333" stroke-width="1.200" stroke-linejoin="round"/><path d="M2 13.300h10.500" stroke="#333" stroke-width="1.200"/></svg>
    <svg style="left:17.5px;top:74.0px" width="14" height="14" viewBox="0 0 14 14"><path d="M1.500 1.500l11.500 3.500-4.500 2.500 3 4.500-2.300 1.500-3-4.500L3 12z" fill="none" stroke="#555" stroke-width="1.200" stroke-linejoin="round"/></svg>
    <svg style="left:17.5px;top:107.5px" width="14" height="12" viewBox="0 0 14 12"><path d="M0 3h3M7 3h7M0 9h7.500M11.500 9h2.500" stroke="#555" stroke-width="1.200"/><circle cx="5" cy="3" r="2" fill="none" stroke="#555" stroke-width="1.200"/><circle cx="9.500" cy="9" r="2" fill="none" stroke="#555" stroke-width="1.200"/></svg>
    <svg style="left:17.5px;top:141.0px" width="14" height="13" viewBox="0 0 14 13"><path d="M5 12H2.500a1.500 1.500 0 0 1-1.500-1.500v-8A1.500 1.500 0 0 1 2.500 1h9A1.500 1.500 0 0 1 13 2.500V6" fill="none" stroke="#555" stroke-width="1.200"/><path d="M3.500 4h2.500M3.500 4v5M3.500 6.500h2" stroke="#555" stroke-width="1.100" fill="none"/><path d="M7.500 12.500c3.500-.5 5-3 5.500-5.500-2.500.5-4.500 2-5.500 5.500zM8.500 8c.5 1 .5 2 0 3.500" fill="none" stroke="#555" stroke-width="1.100"/></svg>
    <svg style="left:17.5px;top:173.0px" width="14" height="14" viewBox="0 0 14 14"><path d="M2 12.500l6-6.500M9.500 1.500l3 3-2 2-3-3z" fill="none" stroke="#555" stroke-width="1.200"/><path d="M2 2l4 1 5.500 8-1.500 1.500L3 6z" fill="none" stroke="#555" stroke-width="1.200" stroke-linejoin="round"/></svg>
    <svg style="left:17.5px;top:206.0px" width="14" height="14" viewBox="0 0 14 14"><circle cx="7" cy="7" r="6" fill="none" stroke="#555" stroke-width="1.200"/><path d="M5 5.500a2 2 0 1 1 2.800 1.800c-.6.300-.8.700-.8 1.400" fill="none" stroke="#555" stroke-width="1.200"/><circle cx="7" cy="10.500" r=".8" fill="#555"/></svg>
    <svg style="left:17.5px;top:243.5px" width="14" height="4" viewBox="0 0 14 4"><circle cx="2" cy="2" r="1.400" fill="none" stroke="#888" stroke-width=".9"/><circle cx="7" cy="2" r="1.400" fill="none" stroke="#888" stroke-width=".9"/><circle cx="12" cy="2" r="1.400" fill="none" stroke="#888" stroke-width=".9"/></svg>
      </div>
  <div id="status" class="abs">
    <svg style="left:135.5px;top:6.5px" width="12" height="9" viewBox="0 0 12 9"><path d="M.6 4.500C2.500 1.500 4.500.8 6 .8s3.500.7 5.400 3.700C9.500 7.500 7.500 8.200 6 8.200S2.500 7.500.6 4.500z" fill="none" stroke="#555" stroke-width="1"/><circle cx="6" cy="4.500" r="1.700" fill="none" stroke="#555" stroke-width="1"/></svg>
    <div class="abs" style="left:157.5px;top:5px;width:1px;height:12px;background:#d6d9de"></div>
    <div class="abs" style="left:165px;top:2px;width:20px;height:18px;border-radius:3px;background:#dcdfe4"></div>
    <svg style="left:170.0px;top:5.5px" width="10" height="11" viewBox="0 0 10 11"><rect x=".6" y=".6" width="8.800" height="9.800" rx="1" fill="none" stroke="#333" stroke-width="1.100"/><path d="M3 4h4M3 6.500h2.500" stroke="#333" stroke-width="1"/></svg>
    <svg style="left:196.0px;top:6.0px" width="11" height="10" viewBox="0 0 11 10"><path d="M3.500 1h7.500M5.500 5h5.500M3.500 9h7.500" stroke="#555" stroke-width="1.100"/><path d="M.5 1h1.500M.5 9h1.500M2.500 5h1.500" stroke="#555" stroke-width="1.100"/></svg>
    <svg style="left:223.0px;top:5.5px" width="10" height="11" viewBox="0 0 10 11"><path d="M1 1l8 4.500-8 4.500z" fill="none" stroke="#555" stroke-width="1.100" stroke-linejoin="round"/></svg>
    <svg style="left:247.0px;top:5.0px" width="12" height="12" viewBox="0 0 12 12"><circle cx="6" cy="6" r="5.300" fill="none" stroke="#555" stroke-width="1"/><ellipse cx="6" cy="6" rx="2.300" ry="5.300" fill="none" stroke="#555" stroke-width="1"/><path d="M.7 6h10.600" stroke="#555" stroke-width="1"/></svg>
    <svg style="left:275.5px;top:5.5px" width="11" height="11" viewBox="0 0 11 11"><path d="M1.500 9.500c0-2 1-2.500 2-3.500l4-4.500 2 2-4 4.500c-1 1-1.500 1.500-4 1.500z" fill="none" stroke="#555" stroke-width="1.100" stroke-linejoin="round"/></svg>
    <div class="abs" style="left:301px;top:5px;width:1px;height:12px;background:#d6d9de"></div>
    <svg style="left:308.0px;top:5.5px" width="11" height="11" viewBox="0 0 11 11"><path d="M.6 3V.6H3M8 .6h2.400V3M10.400 8v2.400H8M3 10.400H.6V8" fill="none" stroke="#555" stroke-width="1.100"/><rect x="3.300" y="3.300" width="4.400" height="4.400" rx="1" fill="none" stroke="#555" stroke-width="1"/></svg>
    <span class="t" style="left:335px;top:6.5px;font-size:9.500px;color:#444">134</span>
    <svg style="left:540.0px;top:5.5px" width="11" height="11" viewBox="0 0 11 11"><path d="M.6 3.500V.6h2.900M7.500 .6h2.900v2.900M10.400 7.500v2.900H7.500M3.500 10.400H.6V7.500" fill="none" stroke="#555" stroke-width="1.100" stroke-dasharray="2.500 1.200"/></svg>
      </div>
  <div id="taskbar" class="abs">
    <div class="abs" style="left:368px;top:-20.5px;width:169px;height:20.500px;background:#fff"></div>
    <div class="abs" style="left:353.500px;top:-23.500px;width:22px;height:22px;background:#f0602a;border-radius:3px;transform:rotate(-12deg)"></div>
    <span class="t" style="left:356px;top:-26px;font-size:24px;font-weight:bold;color:#fff;transform:rotate(-8deg) scaleX(1.100)">S</span>
    <span class="t" style="left:383px;top:-16.5px;font-size:12px;font-weight:bold;color:#1b6fd6">中</span>
    <svg style="left:404.5px;top:-14.5px" width="9" height="9" viewBox="0 0 9 9"><circle cx="1.800" cy="2" r="1.300" fill="none" stroke="#1b6fd6" stroke-width="1.100"/><path d="M6.500 4.500a1.200 1.200 0 1 1 1 1.200c.200 1-.500 2-1.500 2.500" fill="#1b6fd6" stroke="#1b6fd6" stroke-width=".8"/></svg>
    <svg style="left:423.0px;top:-16.5px" width="10" height="13" viewBox="0 0 10 13"><rect x="3" y=".5" width="4" height="7.500" rx="2" fill="#1b6fd6"/><path d="M1 6a4 4 0 0 0 8 0M5 10v2.500M3 12.500h4" fill="none" stroke="#1b6fd6" stroke-width="1.200"/></svg>
    <svg style="left:441.5px;top:-15.0px" width="13" height="10" viewBox="0 0 13 10"><rect x=".6" y=".6" width="11.800" height="8.800" rx="1.200" fill="none" stroke="#1b6fd6" stroke-width="1.200"/><path d="M2.500 3h8M2.500 5h8M4 7.200h5" stroke="#1b6fd6" stroke-width="1.100" stroke-dasharray="1.300 .9"/></svg>
    <svg style="left:459.5px;top:-16.0px" width="14" height="12" viewBox="0 0 14 12"><path d="M4.500 1L1 3.500l1.500 3 1.500-.800V11.500h6V5.700l1.500.8 1.500-3L9.500 1c-.5 1.500-4.500 1.500-5 0z" fill="#a25be0"/><path d="M4 7h6v4.500H4z" fill="#6a6af0"/></svg>
    <div class="abs" style="left:470.5px;top:-18.5px;width:5px;height:5px;border-radius:3px;background:#f0413a"></div>
    <svg style="left:480.5px;top:-14.5px" width="13" height="10" viewBox="0 0 13 10"><rect x=".5" y="2" width="12" height="8" rx="4" fill="#1b6fd6"/><path d="M6.500 2V.3" stroke="#1b6fd6" stroke-width="1.200"/><circle cx="4.300" cy="6" r="1.200" fill="#fff"/><circle cx="8.700" cy="6" r="1.200" fill="#fff"/></svg>
    <svg style="left:501.5px;top:-15.5px" width="11" height="11" viewBox="0 0 11 11"><rect x=".5" y=".5" width="4.300" height="4.300" rx="1" fill="#1b6fd6"/><rect x="6.200" y=".5" width="4.300" height="4.300" rx="2.100" fill="#1b6fd6"/><rect x=".5" y="6.200" width="4.300" height="4.300" rx="1" fill="#1b6fd6"/><rect x="6.200" y="6.200" width="4.300" height="4.300" rx="1" fill="#1b6fd6"/></svg>
    <svg style="left:521.5px;top:-16.0px" width="12" height="12" viewBox="0 0 12 12"><path d="M6 .5l1.500 1.700 2.200-.4.300 2.200 2 1-1 2 1 2-2 1-.3 2.200-2.200-.4L6 11.500l-1.500-1.700-2.200.4-.3-2.200-2-1 1-2-1-2 2-1 .3-2.200 2.200.4z" fill="#1b6fd6" transform="scale(.95) translate(.3 .3)"/><circle cx="6" cy="6" r="1.700" fill="#fff"/></svg>
    <svg style="left:307.5px;top:17.0px" width="11" height="6" viewBox="0 0 11 6"><path d="M1 5.300L5.500 1 10 5.300" fill="none" stroke="#2a2a2a" stroke-width="1.400"/></svg>
    <svg style="left:333.5px;top:12.5px" width="10" height="14" viewBox="0 0 10 14"><rect x="2.800" y=".6" width="4.400" height="8" rx="2.200" fill="#cfe2f7" stroke="#3a78c9" stroke-width="1"/><path d="M1 6.500a4 4 0 0 0 8 0M5 10.500v2.500" fill="none" stroke="#3a78c9" stroke-width="1.100"/></svg>
    <span class="t" style="left:359.5px;top:13.5px;font-size:12px;color:#74777c">中</span>
    <div class="abs" style="left:391px;top:14px;width:12px;height:12px;background:#ee5a2a;border-radius:2px;transform:rotate(-10deg)"></div>
    <span class="t" style="left:392.5px;top:13px;font-size:13px;font-weight:bold;color:#fff;transform:rotate(-8deg)">S</span>
    <svg style="left:420.5px;top:14.5px" width="14" height="11" viewBox="0 0 14 11"><path d="M.8 3.800a9 9 0 0 1 12.400 0M2.800 6a6 6 0 0 1 8.400 0M4.800 8.200a3.200 3.200 0 0 1 4.400 0" fill="none" stroke="#2a2a2a" stroke-width="1.200"/><circle cx="7" cy="10" r="1" fill="#2a2a2a"/></svg>
    <svg style="left:440.0px;top:14.5px" width="13" height="11" viewBox="0 0 13 11"><path d="M1 3.800h2.200L6 1.200v8.600L3.200 7.200H1z" fill="none" stroke="#2a2a2a" stroke-width="1" stroke-linejoin="round"/><path d="M8 3.500a3 3 0 0 1 0 4M9.800 2a5.200 5.200 0 0 1 0 7" fill="none" stroke="#2a2a2a" stroke-width="1"/></svg>
    <svg style="left:459.5px;top:16.0px" width="14" height="8" viewBox="0 0 14 8"><rect x=".6" y=".6" width="11" height="6.800" rx="1.800" fill="none" stroke="#2a2a2a" stroke-width="1.100"/><rect x="2" y="2" width="6" height="4" rx=".8" fill="#2a2a2a"/><path d="M13 2.800v2.400" stroke="#2a2a2a" stroke-width="1.300"/></svg>
    <span class="t" style="right:38px;top:6.300px;font-size:10.300px;color:#222">9:47</span>
    <span class="t" style="right:38px;top:20.300px;font-size:10.300px;color:#222">2024/3/7</span>
    <svg style="left:534.5px;top:13.5px" width="12" height="13" viewBox="0 0 12 13"><path d="M2.500 9V5.500a3.500 3.500 0 0 1 4-3.400M9.500 7.500V9l1 1.500h-9l1-1.500M4.800 11a1.300 1.300 0 0 0 2.400 0" fill="none" stroke="#2a2a2a" stroke-width="1"/><path d="M8 1.500h2.500L8 5h2.500" fill="none" stroke="#2a2a2a" stroke-width=".9"/></svg>
      </div>
</div>

<!-- ================= Explorer window ================= -->
<div id="exp" class="abs">
  <div id="etitle" class="abs"><div id="etab" class="abs"></div>
    <div class="abs" style="left:-6px;top:14px;width:9px;height:11px;background:#f2c94c;border-radius:2px"></div>
    <span class="t" style="left:10.0px;top:15px;font-size:10px;font-weight:bold;color:#222">复试笔试</span>
    <svg style="left:157.5px;top:16.0px" width="8" height="8" viewBox="0 0 8 8"><path d="M.5.500l7 7M7.500.5l-7 7" stroke="#333" stroke-width="1"/></svg>
    <svg style="left:193.0px;top:15.5px" width="9" height="9" viewBox="0 0 9 9"><path d="M4.500 0v9M0 4.500h9" stroke="#333" stroke-width="1"/></svg>
    <svg style="left:603.0px;top:10.0px" width="9" height="2" viewBox="0 0 9 2"><path d="M0 1h9" stroke="#222" stroke-width="1.100"/></svg>
    <svg style="left:641.0px;top:7.5px" width="9" height="9" viewBox="0 0 9 9"><rect x=".6" y=".6" width="7.800" height="7.800" fill="none" stroke="#222" stroke-width="1.100"/></svg>
    <svg style="left:679.5px;top:7.0px" width="10" height="10" viewBox="0 0 10 10"><path d="M.5.500l9 9M9.500.5l-9 9" stroke="#222" stroke-width="1.100"/></svg>
    </div>
  <div id="eaddr" class="abs">
    <svg style="left:-2.5px;top:15.0px" width="6" height="8" viewBox="0 0 6 8"><path d="M5 1L1 4l4 3" fill="none" stroke="#bbb" stroke-width="1"/></svg>
    <svg style="left:31.5px;top:14.5px" width="10" height="9" viewBox="0 0 10 9"><path d="M0 4.500h9.500M6 1l3.500 3.500L6 8" fill="none" stroke="#c6c9cc" stroke-width="1"/></svg>
    <svg style="left:70.5px;top:14.0px" width="9" height="10" viewBox="0 0 9 10"><path d="M4.500 10V.8M1 4.200L4.500.7 8 4.200" fill="none" stroke="#444" stroke-width="1"/></svg>
    <svg style="left:109.5px;top:13.5px" width="11" height="11" viewBox="0 0 11 11"><path d="M9.800 5.500A4.300 4.300 0 1 1 8.300 2.200" fill="none" stroke="#444" stroke-width="1"/><path d="M8.800 0v2.800H6" fill="none" stroke="#444" stroke-width="1"/></svg>
    <div class="abs" style="left:139.5px;top:6.5px;width:331px;height:26.500px;background:#fcfdfe;border-radius:4px"></div>
    <svg style="left:150.5px;top:12.5px" width="13" height="12" viewBox="0 0 13 12"><rect x=".6" y=".6" width="11.800" height="8.300" rx="1.500" fill="none" stroke="#555" stroke-width="1.100"/><path d="M4 11.400h5M6.500 9v2.400" stroke="#555" stroke-width="1.100"/></svg>
    <svg style="left:179.5px;top:16.0px" width="5" height="7" viewBox="0 0 5 7"><path d="M1 .8l3 2.700-3 2.700" fill="none" stroke="#555" stroke-width="1"/></svg>
    <span class="t" style="left:199.5px;top:13px;font-size:11.500px;color:#222">复试</span>
    <svg style="left:236.5px;top:16.0px" width="5" height="7" viewBox="0 0 5 7"><path d="M1 .8l3 2.700-3 2.700" fill="none" stroke="#555" stroke-width="1"/></svg>
    <span class="t" style="left:256.0px;top:13px;font-size:11.500px;color:#222">复试资料分享</span>
    <svg style="left:339.0px;top:16.0px" width="5" height="7" viewBox="0 0 5 7"><path d="M1 .8l3 2.700-3 2.700" fill="none" stroke="#555" stroke-width="1"/></svg>
    <span class="t" style="left:358.5px;top:13px;font-size:11.500px;color:#222">复试笔试</span>
    <div class="abs" style="left:477.5px;top:6.5px;width:217.500px;height:26.500px;background:#fcfdfe;border-radius:4px"></div>
    <span class="t" style="left:490.0px;top:13px;font-size:11.500px;color:#666">在 复试笔试 中搜索</span>
    <svg style="left:675.0px;top:15.0px" width="9" height="9" viewBox="0 0 9 9"><circle cx="3.700" cy="3.700" r="3" fill="none" stroke="#555" stroke-width="1"/><path d="M6 6l2.500 2.500" stroke="#555" stroke-width="1.100"/></svg>
    </div>
  <div id="etool" class="abs">
    <svg style="left:-4.5px;top:17.0px" width="10" height="10" viewBox="0 0 10 10"><circle cx="3" cy="5" r="4.300" fill="none" stroke="#555" stroke-width="1"/><path d="M3 3v4M1 5h4" stroke="#555" stroke-width="1"/></svg>
    <span class="t" style="left:11.5px;top:17px;font-size:10px;color:#222">新建</span>
    <svg style="left:36.5px;top:21.0px" width="5" height="3" viewBox="0 0 5 3"><path d="M.5.500l2 2 2-2" fill="none" stroke="#888" stroke-width=".9"/></svg>
    <div class="abs" style="left:54.5px;top:11px;width:1px;height:22px;background:#eef0f1"></div>
    <svg style="left:71.0px;top:15.5px" width="11" height="13" viewBox="0 0 11 13"><path d="M2.500 .5l5 8M8.500 .5l-5 8" stroke="#c3ced4" stroke-width="1"/><circle cx="2.500" cy="10.500" r="2" fill="none" stroke="#c3ced4"/><circle cx="8.500" cy="10.500" r="2" fill="none" stroke="#c3ced4"/></svg>
    <svg style="left:110.5px;top:16.0px" width="12" height="12" viewBox="0 0 12 12"><rect x="4" y=".6" width="7.400" height="7.400" rx="1.500" fill="none" stroke="#c3ced4"/><path d="M2.500 3.500h-.4A1.500 1.500 0 0 0 .6 5v4.900a1.500 1.500 0 0 0 1.500 1.500H7a1.500 1.500 0 0 0 1.500-1.500v-.4" fill="none" stroke="#c3ced4"/></svg>
    <svg style="left:149.5px;top:15.0px" width="12" height="14" viewBox="0 0 12 14"><path d="M3.500 2H2A1.400 1.400 0 0 0 .6 3.400v8A1.400 1.400 0 0 0 2 12.800h2M8.500 2H10a1.400 1.400 0 0 1 1.400 1.400V5" fill="none" stroke="#c3ced4"/><rect x="3.500" y=".6" width="5" height="2.800" rx="1" fill="none" stroke="#c3ced4"/><rect x="5.500" y="5.500" width="6" height="8" rx="1.200" fill="none" stroke="#c3ced4"/></svg>
    <svg style="left:188.0px;top:15.5px" width="14" height="13" viewBox="0 0 14 13"><path d="M8 2H2.500A1.900 1.900 0 0 0 .6 3.900v5.200A1.900 1.900 0 0 0 2.500 11H8M11 2h.500a1.900 1.900 0 0 1 1.900 1.900v5.200a1.900 1.900 0 0 1-1.900 1.900H11M9.500 0v13" fill="none" stroke="#c3ced4"/><path d="M3 9l2-5 2 5M3.700 7.500h2.600" fill="none" stroke="#c3ced4" stroke-width=".9"/></svg>
    <svg style="left:229.0px;top:16.0px" width="13" height="12" viewBox="0 0 13 12"><path d="M5 2.500H2.500A1.900 1.900 0 0 0 .6 4.400v5a1.900 1.900 0 0 0 1.900 1.900h6a1.900 1.900 0 0 0 1.900-1.900V9" fill="none" stroke="#c3ced4"/><path d="M8 .8l4.200 3.700L8 8.200V6C6 6 4.500 6.500 3.500 8.500 3.500 5.500 5 3.200 8 3z" fill="none" stroke="#c3ced4" stroke-linejoin="round"/></svg>
    <svg style="left:269.0px;top:15.5px" width="11" height="13" viewBox="0 0 11 13"><path d="M0 2.500h11M3.500 2.500V1.800A1.200 1.200 0 0 1 4.700.6h1.600a1.200 1.200 0 0 1 1.200 1.200v.7M1.200 2.500l.700 8.600a1.400 1.400 0 0 0 1.400 1.300h4.400a1.400 1.400 0 0 0 1.400-1.300l.700-8.600M4.300 5v5M6.700 5v5" fill="none" stroke="#c3ced4"/></svg>
    <div class="abs" style="left:295.5px;top:11px;width:1px;height:22px;background:#eef0f1"></div>
    <svg style="left:310.0px;top:16.5px" width="12" height="11" viewBox="0 0 12 11"><path d="M3 10.500V.8M.5 3.300L3 .8l2.500 2.500M9 .5v9.700M6.500 7.700L9 10.200l2.500-2.500" fill="none" stroke="#444" stroke-width="1"/></svg>
    <span class="t" style="left:329.0px;top:17px;font-size:10px;color:#222">排序</span>
    <svg style="left:353.5px;top:21.0px" width="5" height="3" viewBox="0 0 5 3"><path d="M.5.500l2 2 2-2" fill="none" stroke="#888" stroke-width=".9"/></svg>
    <svg style="left:383.5px;top:18.0px" width="12" height="8" viewBox="0 0 12 8"><path d="M0 .6h12M0 4h12M0 7.400h12" stroke="#555" stroke-width="1"/></svg>
    <span class="t" style="left:403.0px;top:17px;font-size:10px;color:#222">查看</span>
    <svg style="left:427.5px;top:21.0px" width="5" height="3" viewBox="0 0 5 3"><path d="M.5.500l2 2 2-2" fill="none" stroke="#888" stroke-width=".9"/></svg>
    <div class="abs" style="left:446.5px;top:11px;width:1px;height:22px;background:#eef0f1"></div>
    <svg style="left:460.0px;top:21.0px" width="12" height="3" viewBox="0 0 12 3"><circle cx="1.500" cy="1.500" r="1.100" fill="#222"/><circle cx="6" cy="1.500" r="1.100" fill="#222"/><circle cx="10.500" cy="1.500" r="1.100" fill="#222"/></svg>
    <svg style="left:644.5px;top:17.0px" width="14" height="10" viewBox="0 0 14 10"><rect x=".6" y=".6" width="12.800" height="8.800" rx="2" fill="none" stroke="#6a8aa5" stroke-width="1"/><path d="M8.500 .6v8.800" stroke="#6a8aa5" stroke-width="1"/></svg>
    <span class="t" style="left:664.5px;top:17px;font-size:10px;color:#222">预览</span>
    </div>
  <div id="enav" class="abs">
    <div class="abs" style="left:1px;top:98.500px;width:81px;height:1px;background:#e6e6e6"></div>
    <div class="abs" style="left:0;top:6px;width:88.5px;height:25.500px;background:#dedfe1;border-radius:0 3px 3px 0"></div>
    <div class="abs" style="left:89.5px;top:1px;width:12.500px;height:485px;background:#f3f3f3"></div>
    <div class="abs" style="left:93.7px;top:14px;width:4.300px;height:458px;background:#7d7d7d;border-radius:2px"></div>
    <svg style="left:2.5px;top:13.5px" width="13" height="12" viewBox="0 0 13 12"><path d="M1 6.500L6.500 1.200 12 6.500" fill="none" stroke="#e8863a" stroke-width="1.600" stroke-linejoin="round"/><path d="M3 6.500v4.800h2.500V8.500h2v2.800H10V6.500" fill="#d9d9d9" stroke="#bdbdbd" stroke-width=".6"/></svg>
    <span class="nv" style="left:19.0px;top:14.5px">主文件夹</span>
    <svg style="left:3.0px;top:38.7px" width="12" height="12" viewBox="0 0 12 12"><rect x=".5" y=".5" width="11" height="11" rx="2" fill="#2f7de0"/><path d="M1.500 10l3-4 2 2.500 1.500-1.500 2.500 3z" fill="#fff"/><circle cx="7" cy="3.500" r="1.200" fill="#fff"/></svg>
    <span class="nv" style="left:19.0px;top:39.7px">图库</span>
    <svg style="left:2.0px;top:66.5px" width="14" height="9" viewBox="0 0 14 9"><path d="M3.500 8.800a3 3 0 0 1-.4-6A4.300 4.300 0 0 1 11 3.500a2.700 2.700 0 0 1-.3 5.300z" fill="#1d7fe0"/></svg>
    <span class="nv" style="left:19.0px;top:66px">炼栋 - 个人</span>
    <svg style="left:2.5px;top:118.7px" width="13" height="10" viewBox="0 0 13 10"><rect x="0" y="0" width="13" height="9" rx="1" fill="#2e9fd8"/><path d="M0 7.500h13V9a1 1 0 0 1-1 1H1a1 1 0 0 1-1-1z" fill="#1c6fb5"/></svg>
    <span class="nv" style="left:19.0px;top:118.7px">桌面</span>
    <svg style="left:77px;top:118.7px" width="9" height="10" viewBox="0 0 7 8"><path d="M4.200.300l2.500 2.500-1.100.4-1.300 1.300.1 1.700L1.300 3.100 3 3.200l1.300-1.300z" fill="#7f8285"/><path d="M2.800 4.700L.5 7.200" stroke="#7f8285" stroke-width="1"/></svg>
    <svg style="left:4.0px;top:144.5px" width="10" height="12" viewBox="0 0 10 12"><path d="M5 .5v8M1.500 5.500L5 9l3.500-3.500M.5 11.200h9" fill="none" stroke="#2a9d6e" stroke-width="1.200"/></svg>
    <span class="nv" style="left:19.0px;top:145.5px">下载</span>
    <svg style="left:77px;top:145.5px" width="9" height="10" viewBox="0 0 7 8"><path d="M4.200.300l2.500 2.500-1.100.4-1.300 1.300.1 1.700L1.300 3.100 3 3.200l1.300-1.300z" fill="#7f8285"/><path d="M2.800 4.700L.5 7.200" stroke="#7f8285" stroke-width="1"/></svg>
    <svg style="left:4.0px;top:170.8px" width="10" height="12" viewBox="0 0 10 12"><rect x=".5" y=".5" width="9" height="11" rx="1.200" fill="#dfe6ee" stroke="#8899aa" stroke-width=".8"/><path d="M2.500 3.500h5M2.500 6h5M2.500 8.500h5" stroke="#6f8296" stroke-width=".9"/></svg>
    <span class="nv" style="left:19.0px;top:171.8px">文档</span>
    <svg style="left:77px;top:171.8px" width="9" height="10" viewBox="0 0 7 8"><path d="M4.200.300l2.500 2.500-1.100.4-1.300 1.300.1 1.700L1.300 3.100 3 3.200l1.300-1.300z" fill="#7f8285"/><path d="M2.800 4.700L.5 7.200" stroke="#7f8285" stroke-width="1"/></svg>
    <svg style="left:3.0px;top:197.5px" width="12" height="11" viewBox="0 0 12 11"><rect x="0" y="0" width="12" height="11" rx="1.500" fill="#2a86d9"/><path d="M1 9.500l3.500-4.500 2.500 3 1.500-1.500 2.500 3z" fill="#fff"/></svg>
    <span class="nv" style="left:19.0px;top:198px">图片</span>
    <svg style="left:77px;top:198.0px" width="9" height="10" viewBox="0 0 7 8"><path d="M4.200.300l2.500 2.500-1.100.4-1.300 1.300.1 1.700L1.300 3.100 3 3.200l1.300-1.300z" fill="#7f8285"/><path d="M2.800 4.700L.5 7.200" stroke="#7f8285" stroke-width="1"/></svg>
    <svg style="left:3.0px;top:223.2px" width="12" height="12" viewBox="0 0 12 12"><circle cx="6" cy="6" r="6" fill="#e8683a"/><path d="M5 8.500V3.500l3.500-.8v4.800" fill="none" stroke="#fff" stroke-width="1"/><circle cx="4" cy="8.500" r="1.200" fill="#fff"/><circle cx="7.500" cy="7.600" r="1.200" fill="#fff"/></svg>
    <span class="nv" style="left:19.0px;top:224.2px">音乐</span>
    <svg style="left:77px;top:224.2px" width="9" height="10" viewBox="0 0 7 8"><path d="M4.200.300l2.500 2.500-1.100.4-1.300 1.300.1 1.700L1.300 3.100 3 3.200l1.300-1.300z" fill="#7f8285"/><path d="M2.800 4.700L.5 7.200" stroke="#7f8285" stroke-width="1"/></svg>
    <svg style="left:3.5px;top:249.4px" width="11" height="12" viewBox="0 0 11 12"><rect x="0" y="0" width="11" height="12" rx="1.500" fill="#7a3fc8"/><path d="M4 3.500l4 2.500-4 2.500z" fill="#fff"/></svg>
    <span class="nv" style="left:19.0px;top:250.4px">视频</span>
    <svg style="left:77px;top:250.4px" width="9" height="10" viewBox="0 0 7 8"><path d="M4.200.300l2.500 2.500-1.100.4-1.300 1.300.1 1.700L1.300 3.100 3 3.200l1.300-1.300z" fill="#7f8285"/><path d="M2.800 4.700L.5 7.200" stroke="#7f8285" stroke-width="1"/></svg>
    <svg style="left:3.0px;top:277.0px" width="12" height="10" viewBox="0 0 12 10"><path d="M0 1.500A1.500 1.500 0 0 1 1.500 0h3l1.500 1.500h4.500A1.500 1.500 0 0 1 12 3v5.500A1.500 1.500 0 0 1 10.500 10h-9A1.500 1.500 0 0 1 0 8.500z" fill="#f5c64a"/><path d="M0 3.300h12v5.200A1.500 1.500 0 0 1 10.500 10h-9A1.500 1.500 0 0 1 0 8.500z" fill="#fbd867"/></svg>
    <span class="nv" style="left:19.0px;top:277px">团队任务</span>
    <svg style="left:3.0px;top:303.2px" width="12" height="10" viewBox="0 0 12 10"><path d="M0 1.500A1.500 1.500 0 0 1 1.500 0h3l1.500 1.500h4.500A1.500 1.500 0 0 1 12 3v5.500A1.500 1.500 0 0 1 10.500 10h-9A1.500 1.500 0 0 1 0 8.500z" fill="#f5c64a"/><path d="M0 3.300h12v5.200A1.500 1.500 0 0 1 10.500 10h-9A1.500 1.500 0 0 1 0 8.500z" fill="#fbd867"/></svg>
    <span class="nv" style="left:19.0px;top:303.2px">最优化系统</span>
    <svg style="left:3.0px;top:330.0px" width="12" height="10" viewBox="0 0 12 10"><path d="M0 1.500A1.500 1.500 0 0 1 1.500 0h3l1.500 1.500h4.500A1.500 1.500 0 0 1 12 3v5.500A1.500 1.500 0 0 1 10.500 10h-9A1.500 1.500 0 0 1 0 8.500z" fill="#f5c64a"/><path d="M0 3.300h12v5.200A1.500 1.500 0 0 1 10.500 10h-9A1.500 1.500 0 0 1 0 8.500z" fill="#fbd867"/></svg>
    <span class="nv" style="left:19.0px;top:330px">Temp</span>
    <svg style="left:3.0px;top:356.0px" width="12" height="10" viewBox="0 0 12 10"><path d="M0 1.500A1.500 1.500 0 0 1 1.500 0h3l1.500 1.500h4.500A1.500 1.500 0 0 1 12 3v5.500A1.500 1.500 0 0 1 10.500 10h-9A1.500 1.500 0 0 1 0 8.500z" fill="#f5c64a"/><path d="M0 3.300h12v5.200A1.500 1.500 0 0 1 10.500 10h-9A1.500 1.500 0 0 1 0 8.500z" fill="#fbd867"/></svg>
    <span class="nv" style="left:19.0px;top:356px">陈炼栋</span>
    <div class="abs" style="left:2px;top:386.5px;width:81px;height:1px;background:#e1e1e1"></div>
    <svg style="left:3.0px;top:408.0px" width="12" height="12" viewBox="0 0 12 12"><path d="M0 5h5v7H0z" fill="#2a9fd8"/><path d="M4 0h5l3 3v9H4z" fill="#1c78c8"/><path d="M6 4h3M6 6.500h3" stroke="#fff" stroke-width=".9"/></svg>
    <span class="nv" style="left:19.0px;top:409px;width:70px;overflow:hidden">C<span style="margin-left:8px">L</span><span style="margin-left:9px">D的企业</span></span>
    <svg style="left:2.5px;top:434.5px" width="13" height="11" viewBox="0 0 13 11"><rect x="0" y="0" width="13" height="8.500" rx="1" fill="#2a8fd6"/><rect x="1.200" y="1.200" width="10.600" height="6" fill="#6cc0ee"/><path d="M4 10.500h5M6.500 8.500v2" stroke="#6a7a88" stroke-width="1"/></svg>
    <span class="nv" style="left:19.0px;top:435px">此电脑</span>
    <svg style="left:9.5px;top:462.0px" width="12" height="9" viewBox="0 0 12 9"><rect x="0" y="0" width="4" height="3.500" fill="#2a9fe0"/><rect x="0" y="5" width="12" height="3.500" rx=".6" fill="#4a4f55"/></svg>
    <span class="nv" style="left:26.0px;top:461.5px">本地磁盘 (C:)</span>
    </div>
  <span class="fl" style="left:130.5px;top:123.0px;color:#555">名称</span>
  <svg style="left:253.0px;top:116.0px" width="6" height="4" viewBox="0 0 6 4"><path d="M.5 3.500L3 1l2.500 2.500" fill="none" stroke="#888" stroke-width=".8"/></svg>
  <div class="abs" style="left:384.5px;top:119.0px;width:1px;height:17px;background:#ededed"></div>
  <div class="abs" style="left:477.5px;top:119.0px;width:1px;height:17px;background:#f2f2f2"></div>
  <span class="fl" style="left:390.5px;top:123.0px;color:#555">修改日期</span>
  <svg style="left:122.0px;top:150.5px" width="11" height="11" viewBox="0 0 11 11"><path d="M1.500 0h6L10 2.500V10a1 1 0 0 1-1 1H1.500a1 1 0 0 1-1-1V1a1 1 0 0 1 1-1z" fill="#f4f4f4" stroke="#d0d0d0" stroke-width=".5"/><rect x="0" y="3.800" width="11" height="5" rx=".8" fill="#d9262c"/></svg><span class="fl" style="left:123.5px;top:154.5px;font-size:3.500px;color:#fff;font-weight:bold">PDF</span>
  <span class="fl" style="left:138.0px;top:151.0px">1_研究生复试概率论与数理统计（学硕）20210402</span>
  <span class="fd" style="left:390.5px;top:151.0px">2023/2/26 11:48</span>
  <svg style="left:122.0px;top:177.3px" width="11" height="11" viewBox="0 0 11 11"><path d="M1.500 0h6L10 2.500V10a1 1 0 0 1-1 1H1.500a1 1 0 0 1-1-1V1a1 1 0 0 1 1-1z" fill="#f4f4f4" stroke="#d0d0d0" stroke-width=".5"/><rect x="0" y="3.800" width="11" height="5" rx=".8" fill="#d9262c"/></svg><span class="fl" style="left:123.5px;top:181.3px;font-size:3.500px;color:#fff;font-weight:bold">PDF</span>
  <span class="fl" style="left:150.0px;top:177.8px">2019广东工业大学概率论试卷及答案 (A )</span>
  <span class="fd" style="left:390.5px;top:177.8px">2023/3/23 22:45</span>
  <svg style="left:122.0px;top:204.3px" width="11" height="11" viewBox="0 0 11 11"><path d="M1.500 0h6L10 2.500V10a1 1 0 0 1-1 1H1.500a1 1 0 0 1-1-1V1a1 1 0 0 1 1-1z" fill="#f4f4f4" stroke="#d0d0d0" stroke-width=".5"/><rect x="0" y="3.800" width="11" height="5" rx=".8" fill="#d9262c"/></svg><span class="fl" style="left:123.5px;top:208.3px;font-size:3.500px;color:#fff;font-weight:bold">PDF</span>
  <span class="fl" style="left:150.0px;top:204.8px">2020年广东工业大学概率论与数理统计试卷及答案</span>
  <span class="fd" style="left:390.5px;top:204.8px">2023/3/23 22:45</span>
  <svg style="left:122.0px;top:231.1px" width="11" height="11" viewBox="0 0 11 11"><path d="M1.500 0h6L10 2.500V10a1 1 0 0 1-1 1H1.500a1 1 0 0 1-1-1V1a1 1 0 0 1 1-1z" fill="#f4f4f4" stroke="#d0d0d0" stroke-width=".5"/><rect x="0" y="3.800" width="11" height="5" rx=".8" fill="#d9262c"/></svg><span class="fl" style="left:123.5px;top:235.1px;font-size:3.500px;color:#fff;font-weight:bold">PDF</span>
  <span class="fl" style="left:150.0px;top:231.6px">2021年广东工业大学概率论考试及答案</span>
  <span class="fd" style="left:390.5px;top:231.6px">2023/3/23 22:45</span>
  <svg style="left:122.0px;top:258.3px" width="11" height="11" viewBox="0 0 11 11"><path d="M1.500 0h6L10 2.500V10a1 1 0 0 1-1 1H1.500a1 1 0 0 1-1-1V1a1 1 0 0 1 1-1z" fill="#f4f4f4" stroke="#d0d0d0" stroke-width=".5"/><rect x="0" y="3.800" width="11" height="5" rx=".8" fill="#d9262c"/></svg><span class="fl" style="left:123.5px;top:262.3px;font-size:3.500px;color:#fff;font-weight:bold">PDF</span>
  <span class="fl" style="left:137.5px;top:258.8px">专硕复试考试笔试卷20210405(2)</span>
  <span class="fd" style="left:390.5px;top:258.8px">2023/2/26 11:48</span>
  <span class="fl" style="left:546.5px;top:380.0px;font-size:9.700px;color:#5a5a5a">选择要预览的文件。</span>
  <svg style="left:193.0px;top:285.0px" width="9" height="14" viewBox="0 0 9 14"><path d="M.6.800v10l2.400-2.200 1.800 4 1.600-.7-1.800-3.900h3.300z" fill="#fff" stroke="#333" stroke-width=".8" stroke-linejoin="round"/></svg>
</div>

<!-- ================= overlays ================= -->
<div id="rec" class="abs">
  <svg style="left:8px;top:11px" width="20" height="17" viewBox="0 0 20 17"><path d="M4.500 16a4.200 4.200 0 0 1-.6-8.400A6 6 0 0 1 15.500 7a4.500 4.500 0 0 1-.5 9z" fill="#fff"/><circle cx="16.500" cy="11.500" r="4.600" fill="#f5352f" stroke="#4b4e51" stroke-width="1"/></svg>
  <span class="t" style="left:35.500px;top:10.800px;font-size:15.300px;color:#fff">录制中</span>
</div>
<div id="share" class="abs">
  <svg style="left:8px;top:6px" width="16" height="19" viewBox="0 0 16 19"><rect x="4.500" y="0" width="7" height="11.500" rx="3.500" fill="#f2f2f2"/><path d="M1.200 8.500a6.800 6.800 0 0 0 13.600 0M8 15.500v3" fill="none" stroke="#f2f2f2" stroke-width="1.800"/></svg>
  <svg style="left:30px;top:8px" width="17" height="16" viewBox="0 0 17 16"><rect x="0" y="0" width="17" height="11.500" rx="2" fill="#f2f2f2"/><path d="M4.500 8.500c.5-2.500 2.500-3.500 4.500-3.500V3l3.500 3-3.500 3V7c-2 0-3.500.5-4.500 1.500z" fill="#1f2123"/><path d="M4.500 14.500h8" stroke="#f2f2f2" stroke-width="1.800"/></svg>
  <span class="t" style="left:51.500px;top:8.500px;font-size:15.700px;color:#f2f2f2">陈炼栋的屏幕共享</span>
</div>
<div id="leftstrip" class="abs"></div>
<div class="abs" style="left:1265px;top:0;width:3px;height:798px;background:#efefef"></div>
</body>
</html>
